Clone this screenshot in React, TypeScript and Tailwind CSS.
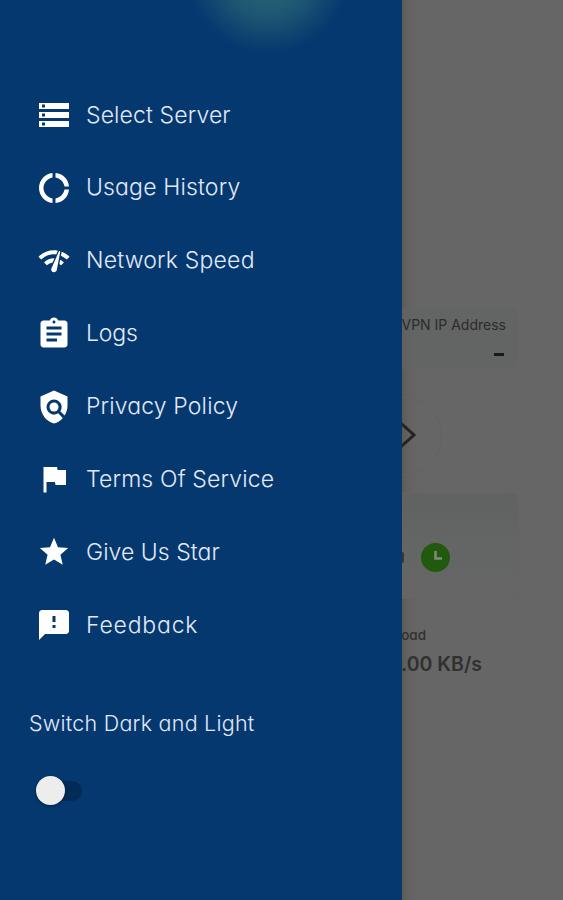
import React from "react";
import type { IconType } from "react-icons";
import {
  MdAssignment,
  MdDonutLarge,
  MdFeedback,
  MdFlag,
  MdGrade,
  MdNetworkCheck,
  MdPolicy,
  MdStorage,
} from "react-icons/md";

type Item = { label: string; icon: IconType; iconClass: string; textClass: string };

const items: Item[] = [
  { label: "Select Server", icon: MdStorage, iconClass: "size-9", textClass: "tracking-[0.12px]" },
  { label: "Usage History", icon: MdDonutLarge, iconClass: "size-9", textClass: "tracking-[0.16px]" },
  { label: "Network Speed", icon: MdNetworkCheck, iconClass: "size-[34px]", textClass: "tracking-[0.2px]" },
  { label: "Logs", icon: MdAssignment, iconClass: "size-9", textClass: "tracking-[-0.15px]" },
  { label: "Privacy Policy", icon: MdPolicy, iconClass: "size-9", textClass: "tracking-[0.15px]" },
  { label: "Terms Of Service", icon: MdFlag, iconClass: "size-9", textClass: "tracking-[0.16px]" },
  { label: "Give Us Star", icon: MdGrade, iconClass: "size-[34px]", textClass: "tracking-[0.05px]" },
  { label: "Feedback", icon: MdFeedback, iconClass: "size-9", textClass: "tracking-[0.8px]" },
];

function Drawer() {
  return (
    <aside className="relative flex h-full w-[402px] shrink-0 flex-col overflow-hidden bg-[#04386f] pt-[78.6px] text-[#e3e9f7]">
      <div className="absolute top-[-106px] left-[186px] h-[160px] w-[164px] bg-[radial-gradient(closest-side,#2a6a74_0%,#256173_25%,#1c5572_55%,#0f4470_80%,#04386f_100%)]" />
      <nav className="flex flex-col">
        {items.map(({ label, icon: Icon, iconClass, textClass }) => (
          <a key={label} className="flex h-[72.9px] items-center pl-9">
            <span className="flex size-9 items-center justify-center text-white">
              <Icon className={iconClass} />
            </span>
            <span className={`ml-3.5 text-[23px] leading-none font-light whitespace-nowrap ${textClass}`}>{label}</span>
          </a>
        ))}
      </nav>
      <div className="mt-[45.2px] pl-[29px] text-[21.5px] leading-8 font-light tracking-[0.23px] whitespace-nowrap">
        Switch Dark and Light
      </div>
      <div className="mt-[37px] ml-9 flex h-[30px] w-[46px] items-center">
        <span className="z-10 size-[29px] shrink-0 rounded-full bg-[#ededed] shadow-[0_1px_3px_rgba(0,0,0,0.4)]" />
        <span className="-ml-[24px] h-5 w-[41px] shrink-0 rounded-full bg-[#042b55]" />
      </div>
    </aside>
  );
}

function Dashboard() {
  return (
    <main className="flex h-full w-[161px] flex-col overflow-hidden bg-[linear-gradient(to_right,#5b5c58_0,#626260_6px,#666666_16px)] pt-[308px] text-[#2b2b2d]">
      <section className="flex h-[61px] w-[116px] flex-col items-end justify-between rounded-r-lg bg-[#626464]/70 pt-[9px] pr-3 pb-[13px]">
        <span className="text-[14px] leading-4 whitespace-nowrap">VPN IP Address</span>
        <span className="mr-0.5 h-[3px] w-[10px] bg-[#191919]" />
      </section>
      <div className="mt-[28px] -ml-[38px] flex size-[78px] items-center justify-center rounded-full border border-[#636363]">
        <svg viewBox="0 0 78 78" className="size-[78px] shrink-0" fill="none" stroke="#242424" strokeWidth="3">
          <path d="M35 24.5 L50 38 L35 51.5" />
        </svg>
      </div>
      <section className="mt-[18px] flex h-[106px] w-[117px] items-center rounded-r-lg border border-l-0 border-[#636464] bg-[linear-gradient(#606262,#646565_45%,#666666)] pt-[22px]">
        <span className="h-[11px] w-[1.5px] rounded-r-full bg-[#373737]" />
        <svg viewBox="0 0 29 29" className="ml-[17px] size-[29px]">
          <circle cx="14.5" cy="14.5" r="14.5" fill="#21590e" />
          <path d="M14.5 8V15.5H21" fill="none" stroke="#7c8b7a" strokeWidth="2.6" />
        </svg>
      </section>
      <div className="mt-[26px] flex w-[24px] justify-end text-[13.5px] leading-5 font-medium text-[#303030]">oad</div>
      <div className="mt-[7px] flex w-[80px] justify-end text-[19.5px] leading-6 font-semibold whitespace-nowrap text-[#303030]">
        .00 KB/s
      </div>
    </main>
  );
}

export default function App() {
  return (
    <div className="flex h-[900px] w-[563px] overflow-hidden bg-[#666666] font-['Inter','Open_Sans',sans-serif] [font-feature-settings:'cv11']">
      <Drawer />
      <Dashboard />
    </div>
  );
}
